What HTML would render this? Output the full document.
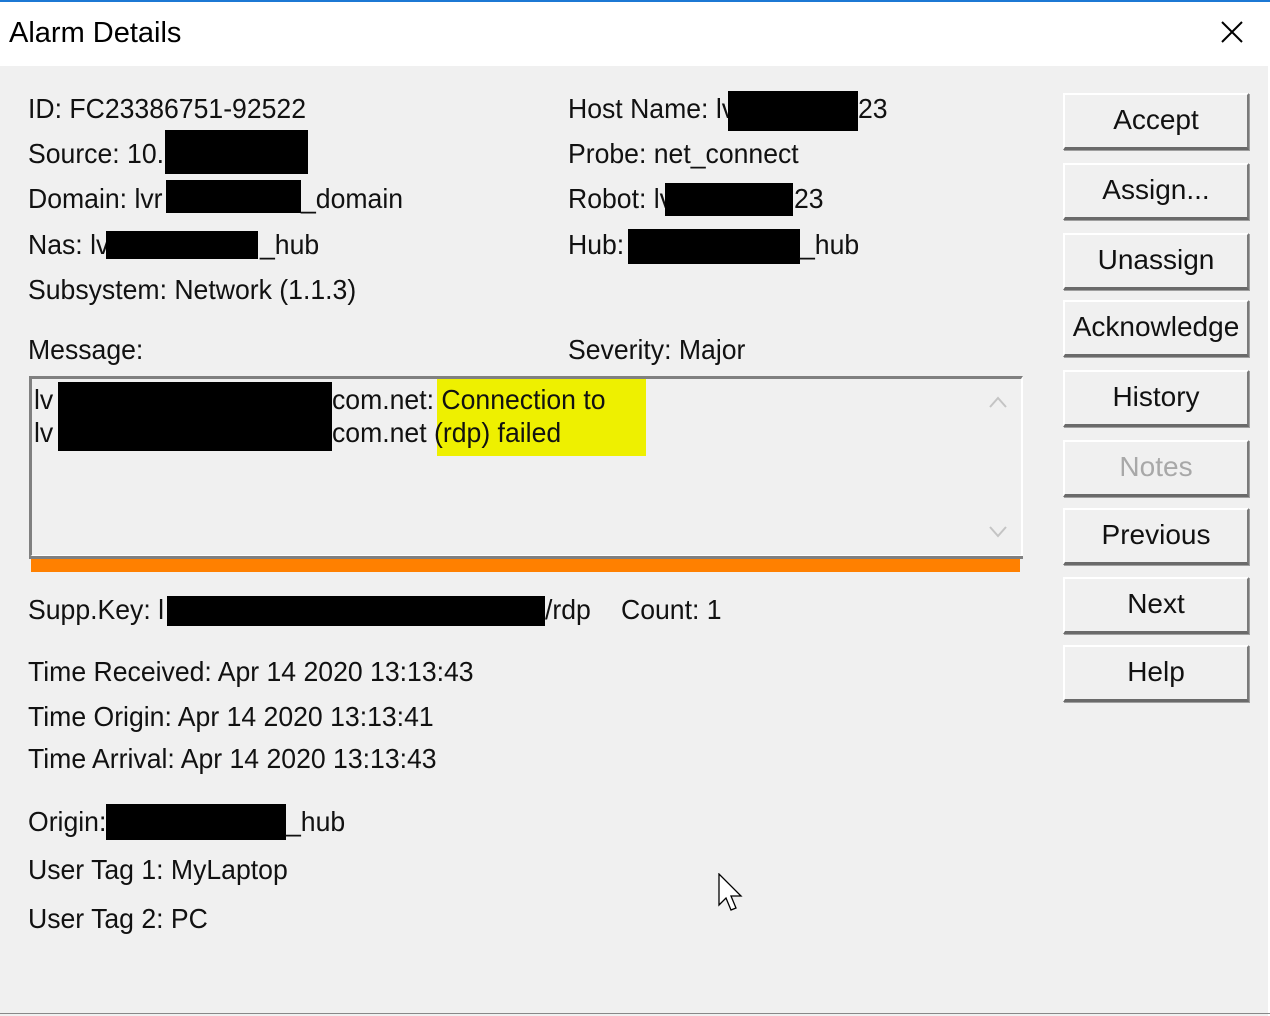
<!DOCTYPE html>
<html><head><style>
body{margin:0;width:1270px;height:1016px;background:#f0f0f0;position:relative;overflow:hidden;font-family:"Liberation Sans",sans-serif}
.t{position:absolute;font-size:28px;color:#111;white-space:nowrap;transform:scaleX(.95);transform-origin:0 0;line-height:32px}
.r{position:absolute;background:#000}
.b{position:absolute;left:1063px;width:182px;height:52px;background:#f0f0f0;border-top:2px solid #fff;border-left:2px solid #fff;border-right:2px solid #7a7a7a;border-bottom:3px solid #6a6a6a;box-shadow:1px 1px 0 #a0a0a0;text-align:center;font-size:28px;line-height:50px;color:#111}
.b span{display:inline-block;transform:scaleX(1.0)}
</style></head><body>
<div style="position:absolute;left:0;top:0;width:1270px;height:2px;background:#1c78d4"></div>
<div style="position:absolute;left:0;top:2px;width:1270px;height:64px;background:#fff"></div>
<div style="position:absolute;left:9px;top:17px;font-size:29px;color:#000">Alarm Details</div>
<svg style="position:absolute;left:1221px;top:21px" width="22" height="22"><path d="M1 1L21 21M21 1L1 21" stroke="#000" stroke-width="2"/></svg>
<div style="position:absolute;left:1268px;top:66px;width:2px;height:950px;background:#fff"></div>
<div style="position:absolute;left:0;top:1013px;width:1270px;height:1px;background:#888"></div>

<div class="t" style="left:28px;top:93px">ID: FC23386751-92522</div>
<div class="t" style="left:28px;top:138px">Source: 10.</div>
<div class="r" style="left:165px;top:130px;width:143px;height:44px"></div>
<div class="t" style="left:28px;top:183px">Domain: lvr</div>
<div class="r" style="left:166px;top:180px;width:135px;height:33px"></div>
<div class="t" style="left:301px;top:183px">_domain</div>
<div class="t" style="left:28px;top:229px">Nas: lv</div>
<div class="r" style="left:106px;top:231px;width:152px;height:28px"></div>
<div class="t" style="left:260px;top:229px">_hub</div>
<div class="t" style="left:28px;top:274px">Subsystem: Network (1.1.3)</div>

<div class="t" style="left:568px;top:93px">Host Name: lv</div>
<div class="r" style="left:728px;top:91px;width:130px;height:40px"></div>
<div class="t" style="left:858px;top:93px">23</div>
<div class="t" style="left:568px;top:138px">Probe: net_connect</div>
<div class="t" style="left:568px;top:183px">Robot: lv</div>
<div class="r" style="left:665px;top:183px;width:128px;height:33px"></div>
<div class="t" style="left:794px;top:183px">23</div>
<div class="t" style="left:568px;top:229px">Hub:</div>
<div class="r" style="left:628px;top:229px;width:172px;height:35px"></div>
<div class="t" style="left:800px;top:229px">_hub</div>

<div class="t" style="left:28px;top:334px">Message:</div>
<div class="t" style="left:568px;top:334px">Severity: Major</div>

<div style="position:absolute;left:29px;top:376px;width:989px;height:176px;border-top:3px solid #808080;border-left:3px solid #808080;border-right:2px solid #fff;border-bottom:2px solid #fff;background:#f0f0f0"></div>
<div style="position:absolute;left:437px;top:379px;width:209px;height:77px;background:#eef000"></div>
<div class="r" style="left:58px;top:382px;width:274px;height:69px"></div>
<div class="t" style="left:34px;top:384px">lv</div>
<div class="t" style="left:34px;top:417px">lv</div>
<div class="t" style="left:332px;top:384px">com.net: Connection to</div>
<div class="t" style="left:332px;top:417px">com.net (rdp) failed</div>
<svg style="position:absolute;left:988px;top:395px" width="20" height="14"><path d="M2 12L10 3L18 12" fill="none" stroke="#c4c4c4" stroke-width="2"/></svg>
<svg style="position:absolute;left:988px;top:525px" width="20" height="14"><path d="M2 2L10 11L18 2" fill="none" stroke="#c4c4c4" stroke-width="2"/></svg>
<div style="position:absolute;left:29px;top:556px;width:994px;height:3px;background:#808080"></div>
<div style="position:absolute;left:31px;top:559px;width:989px;height:13px;background:#ff8000"></div>

<div class="t" style="left:28px;top:594px">Supp.Key: l</div>
<div class="r" style="left:167px;top:596px;width:378px;height:30px"></div>
<div class="t" style="left:545px;top:594px">/rdp</div>
<div class="t" style="left:621px;top:594px">Count: 1</div>

<div class="t" style="left:28px;top:656px">Time Received: Apr 14 2020 13:13:43</div>
<div class="t" style="left:28px;top:701px">Time Origin: Apr 14 2020 13:13:41</div>
<div class="t" style="left:28px;top:743px">Time Arrival: Apr 14 2020 13:13:43</div>
<div class="t" style="left:28px;top:806px">Origin:</div>
<div class="r" style="left:106px;top:804px;width:180px;height:36px"></div>
<div class="t" style="left:286px;top:806px">_hub</div>
<div class="t" style="left:28px;top:854px">User Tag 1: MyLaptop</div>
<div class="t" style="left:28px;top:903px">User Tag 2: PC</div>

<div class="b" style="top:93px"><span>Accept</span></div>
<div class="b" style="top:163px"><span>Assign...</span></div>
<div class="b" style="top:233px"><span>Unassign</span></div>
<div class="b" style="top:300px"><span>Acknowledge</span></div>
<div class="b" style="top:370px"><span>History</span></div>
<div class="b" style="top:440px;color:#a8a8a8"><span>Notes</span></div>
<div class="b" style="top:508px"><span>Previous</span></div>
<div class="b" style="top:577px"><span>Next</span></div>
<div class="b" style="top:645px"><span>Help</span></div>

<svg style="position:absolute;left:718px;top:873px" width="26" height="40"><path d="M1 1V32L8 25L13 37L18 35L13 23H23Z" fill="#fff" stroke="#000" stroke-width="1.3"/></svg>
</body></html>
